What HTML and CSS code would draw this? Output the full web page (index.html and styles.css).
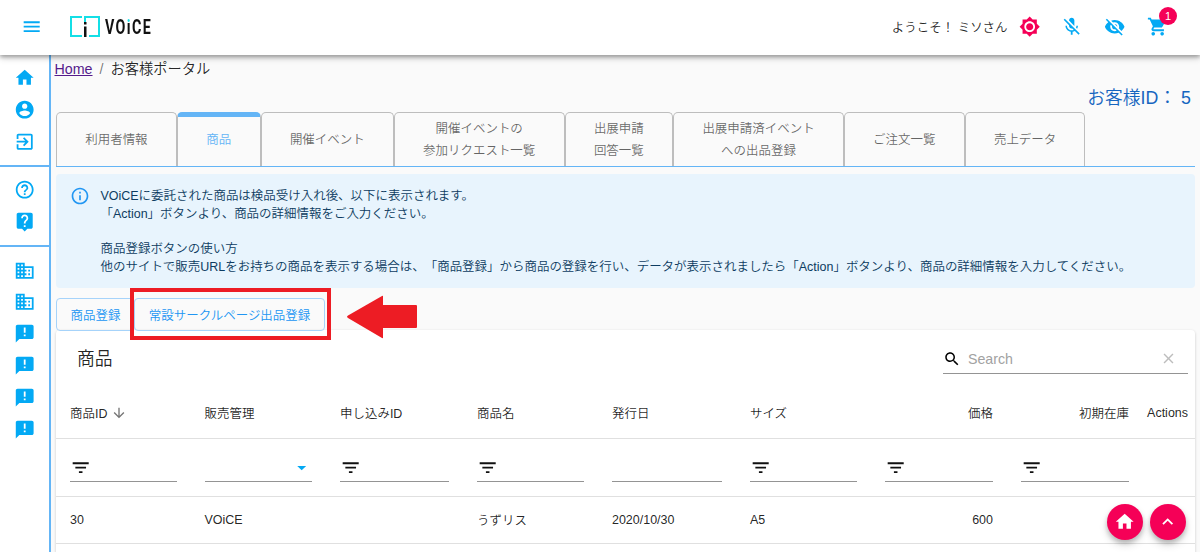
FILE: index.html
```html
<!DOCTYPE html>
<html lang="ja">
<head>
    <meta charset="UTF-8">
    <meta name="viewport" content="width=device-width, initial-scale=1.0">
    <title>お客様ポータル - VOiCE</title>
    <link rel="stylesheet" href="styles.css">
</head>
<body>
    <!-- shared icons -->
    <svg class="sprite">
        <symbol id="menu" viewBox="0 0 24 24"><path d="M3 18h18v-2H3v2zm0-5h18v-2H3v2zm0-7v2h18V6H3z"/></symbol>
        <symbol id="home" viewBox="0 0 24 24"><path d="M10 20v-6h4v6h5v-8h3L12 3 2 12h3v8z"/></symbol>
        <symbol id="account" viewBox="0 0 24 24"><path d="M12 2C6.48 2 2 6.48 2 12s4.48 10 10 10 10-4.48 10-10S17.52 2 12 2zm0 3c1.66 0 3 1.34 3 3s-1.34 3-3 3-3-1.34-3-3 1.34-3 3-3zm0 14.2c-2.5 0-4.71-1.28-6-3.22.03-1.99 4-3.08 6-3.08 1.99 0 5.97 1.09 6 3.08-1.29 1.94-3.5 3.22-6 3.22z"/></symbol>
        <symbol id="exit" viewBox="0 0 24 24"><path d="M10.09 15.59L11.5 17l5-5-5-5-1.41 1.41L12.67 11H3v2h9.67l-2.58 2.59zM19 3H5c-1.11 0-2 .9-2 2v4h2V5h14v14H5v-4H3v4c0 1.1.89 2 2 2h14c1.1 0 2-.9 2-2V5c0-1.1-.9-2-2-2z"/></symbol>
        <symbol id="help" viewBox="0 0 24 24"><path d="M11 18h2v-2h-2v2zm1-16C6.48 2 2 6.48 2 12s4.48 10 10 10 10-4.48 10-10S17.52 2 12 2zm0 18c-4.41 0-8-3.59-8-8s3.59-8 8-8 8 3.59 8 8-3.59 8-8 8zm0-14c-2.21 0-4 1.79-4 4h2c0-1.1.9-2 2-2s2 .9 2 2c0 2-3 1.75-3 5h2c0-2.25 3-2.5 3-5 0-2.21-1.79-4-4-4z"/></symbol>
        <symbol id="live-help" viewBox="0 0 24 24"><path d="M19 2H5c-1.11 0-2 .9-2 2v14c0 1.1.89 2 2 2h4l3 3 3-3h4c1.1 0 2-.9 2-2V4c0-1.1-.9-2-2-2zm-6 16h-2v-2h2v2zm2.07-7.75l-.9.92C13.45 11.9 13 12.5 13 14h-2v-.5c0-1.1.45-2.1 1.17-2.83l1.24-1.26c.37-.36.59-.86.59-1.41 0-1.1-.9-2-2-2s-2 .9-2 2H8c0-2.21 1.79-4 4-4s4 1.79 4 4c0 .88-.36 1.68-.93 2.25z"/></symbol>
        <symbol id="business" viewBox="0 0 24 24"><path d="M12 7V3H2v18h20V7H12zM6 19H4v-2h2v2zm0-4H4v-2h2v2zm0-4H4V9h2v2zm0-4H4V5h2v2zm4 12H8v-2h2v2zm0-4H8v-2h2v2zm0-4H8V9h2v2zm0-4H8V5h2v2zm10 12h-8v-2h2v-2h-2v-2h2v-2h-2V9h8v10zm-2-8h-2v2h2v-2zm0 4h-2v2h2v-2z"/></symbol>
        <symbol id="feedback" viewBox="0 0 24 24"><path d="M20 2H4c-1.1 0-1.99.9-1.99 2L2 22l4-4h14c1.1 0 2-.9 2-2V4c0-1.1-.9-2-2-2zm-7 9h-2V5h2v6zm0 4h-2v-2h2v2z"/></symbol>
        <symbol id="sun" viewBox="0 0 24 24"><path d="M20 8.69V4h-4.69L12 .69 8.69 4H4v4.69L.69 12 4 15.31V20h4.69L12 23.31 15.31 20H20v-4.69L23.31 12 20 8.69zM12 18c-3.31 0-6-2.69-6-6s2.69-6 6-6 6 2.69 6 6-2.69 6-6 6zm0-10c-2.21 0-4 1.79-4 4s1.79 4 4 4 4-1.79 4-4-1.79-4-4-4z"/></symbol>
        <symbol id="mic-off" viewBox="0 0 24 24"><path d="M19 11h-1.7c0 .74-.16 1.43-.43 2.05l1.23 1.23c.56-.98.9-2.09.9-3.28zm-4.02.17c0-.06.02-.11.02-.17V5c0-1.66-1.34-3-3-3S9 3.34 9 5v.18l5.98 5.99zM4.27 3L3 4.27l6.01 6.01V11c0 1.66 1.33 3 2.99 3 .22 0 .44-.03.65-.08l1.66 1.66c-.71.33-1.5.52-2.31.52-2.76 0-5.3-2.1-5.3-5.1H5c0 3.41 2.72 6.23 6 6.72V21h2v-3.28c.91-.13 1.77-.45 2.54-.9L19.73 21 21 19.73 4.27 3z"/></symbol>
        <symbol id="eye-off" viewBox="0 0 24 24"><path d="M12 7c2.76 0 5 2.24 5 5 0 .65-.13 1.26-.36 1.83l2.92 2.92c1.51-1.26 2.7-2.89 3.43-4.75-1.73-4.39-6-7.5-11-7.5-1.4 0-2.74.25-3.98.7l2.16 2.16C10.74 7.13 11.35 7 12 7zM2 4.27l2.28 2.28.46.46C3.08 8.3 1.78 10.02 1 12c1.73 4.39 6 7.5 11 7.5 1.55 0 3.03-.3 4.38-.84l.42.42L19.73 22 21 20.73 3.27 3 2 4.27zM7.53 9.8l1.55 1.55c-.05.21-.08.43-.08.65 0 1.66 1.34 3 3 3 .22 0 .44-.03.65-.08l1.55 1.55c-.67.33-1.41.53-2.2.53-2.76 0-5-2.24-5-5 0-.79.2-1.53.53-2.2zm4.31-.78l3.15 3.15.02-.16c0-1.66-1.34-3-3-3l-.17.01z"/></symbol>
        <symbol id="cart" viewBox="0 0 24 24"><path d="M7 18c-1.1 0-1.99.9-1.99 2S5.9 22 7 22s2-.9 2-2-.9-2-2-2zM1 2v2h2l3.6 7.59-1.35 2.45c-.16.28-.25.61-.25.96 0 1.1.9 2 2 2h12v-2H7.42c-.14 0-.25-.11-.25-.25l.03-.12.9-1.63h7.45c.75 0 1.41-.41 1.75-1.03l3.58-6.49c.08-.14.12-.31.12-.48 0-.55-.45-1-1-1H5.21l-.94-2H1zm16 16c-1.1 0-1.99.9-1.99 2s.89 2 1.99 2 2-.9 2-2-.9-2-2-2z"/></symbol>
        <symbol id="info" viewBox="0 0 24 24"><path d="M11 7h2v2h-2zm0 4h2v6h-2zm1-9C6.48 2 2 6.48 2 12s4.48 10 10 10 10-4.48 10-10S17.52 2 12 2zm0 18c-4.41 0-8-3.59-8-8s3.59-8 8-8 8 3.59 8 8-3.59 8-8 8z"/></symbol>
        <symbol id="down" viewBox="0 0 24 24"><path d="M20 12l-1.41-1.41L13 16.17V4h-2v12.17l-5.58-5.59L4 12l8 8 8-8z"/></symbol>
        <symbol id="search" viewBox="0 0 24 24"><path d="M15.5 14h-.79l-.28-.27C15.41 12.59 16 11.11 16 9.5 16 5.91 13.09 3 9.5 3S3 5.91 3 9.5 5.91 16 9.5 16c1.61 0 3.09-.59 4.23-1.57l.27.28v.79l5 4.99L20.49 19l-4.99-5zm-6 0C7.01 14 5 11.99 5 9.5S7.01 5 9.5 5 14 7.01 14 9.5 11.99 14 9.5 14z"/></symbol>
        <symbol id="clear" viewBox="0 0 24 24"><path d="M19 6.41L17.59 5 12 10.59 6.41 5 5 6.41 10.59 12 5 17.59 6.41 19 12 13.41 17.59 19 19 17.59 13.41 12z"/></symbol>
        <symbol id="filter" viewBox="0 0 24 24"><path d="M10 18h4v-2h-4v2zM3 6v2h18V6H3zm3 7h12v-2H6v2z"/></symbol>
        <symbol id="drop" viewBox="0 0 24 24"><path d="M7 10l5 5 5-5z"/></symbol>
        <symbol id="up" viewBox="0 0 24 24"><path d="M12 8l-6 6 1.41 1.41L12 10.83l4.59 4.58L18 14z"/></symbol>
    </svg>

    <header class="appbar">
        <svg class="icon menu-btn"><use href="#menu"/></svg>
        <div class="logo">
            <svg class="logo-mark" viewBox="0 0 31 22">
                <path d="M12 1H1v19h11M15 6V1h14v19H19" fill="none" stroke="#14dfe6" stroke-width="2"/>
                <path d="M14 6h2.500v2.500h-2.500zM14 10.500h2.500v10.500h-2.500z" fill="#111"/>
            </svg>
            <span class="logo-text">VO<span class="logo-i">i</span>CE</span>
        </div>
        <span class="welcome">ようこそ！ ミソさん</span>
        <div class="appbar-icons">
            <svg class="icon pink"><use href="#sun"/></svg>
            <svg class="icon"><use href="#mic-off"/></svg>
            <svg class="icon"><use href="#eye-off"/></svg>
            <div class="cart">
                <svg class="icon"><use href="#cart"/></svg>
                <span class="badge">1</span>
            </div>
        </div>
    </header>

    <div class="layout">
        <nav class="sidebar">
            <div class="side-group">
                <svg class="icon"><use href="#home"/></svg>
                <svg class="icon"><use href="#account"/></svg>
                <svg class="icon"><use href="#exit"/></svg>
            </div>
            <div class="side-group">
                <svg class="icon"><use href="#help"/></svg>
                <svg class="icon"><use href="#live-help"/></svg>
            </div>
            <div class="side-group">
                <svg class="icon"><use href="#business"/></svg>
                <svg class="icon"><use href="#business"/></svg>
                <svg class="icon"><use href="#feedback"/></svg>
                <svg class="icon"><use href="#feedback"/></svg>
                <svg class="icon"><use href="#feedback"/></svg>
                <svg class="icon"><use href="#feedback"/></svg>
            </div>
        </nav>

        <main class="content">
            <div class="breadcrumbs"><a href="#">Home</a><span class="sep">/</span><span>お客様ポータル</span></div>
            <div class="customer-id">お客様ID： 5</div>

            <div class="tabs">
                <div class="tab tab-m">利用者情報</div>
                <div class="tab tab-s active">商品</div>
                <div class="tab tab-event">開催イベント</div>
                <div class="tab tab-l">開催イベントの<br>参加リクエスト一覧</div>
                <div class="tab tab-answer">出展申請<br>回答一覧</div>
                <div class="tab tab-l">出展申請済イベント<br>への出品登録</div>
                <div class="tab tab-m">ご注文一覧</div>
                <div class="tab tab-m">売上データ</div>
            </div>

            <div class="alert">
                <svg class="alert-icon"><use href="#info"/></svg>
                <div class="alert-text">
                    VOiCEに委託された商品は検品受け入れ後、以下に表示されます。<br>
                    「Action」ボタンより、商品の詳細情報をご入力ください。<br>
                    <br>
                    商品登録ボタンの使い方<br>
                    他のサイトで販売URLをお持ちの商品を表示する場合は、「商品登録」から商品の登録を行い、データが表示されましたら「Action」ボタンより、商品の詳細情報を入力してください。
                </div>
            </div>

            <div class="actions">
                <button class="btn">商品登録</button>
                <button class="btn btn-circle">常設サークルページ出品登録</button>
                <div class="highlight"></div>
                <svg class="arrow" viewBox="0 0 70 44"><path d="M1 20.500L35 1q1-.5 1 .5V10h33q1 0 1 1v21q0 1-1 1H36v9.500q0 1-1 .5L1 23q-2-1.200 0-2.500z"/></svg>
            </div>

            <section class="paper">
                <div class="toolbar">
                    <h2>商品</h2>
                    <div class="search">
                        <svg class="search-icon"><use href="#search"/></svg>
                        <span>Search</span>
                        <svg class="clear-icon"><use href="#clear"/></svg>
                    </div>
                </div>
                <div class="row head">
                    <div class="cell">商品ID<svg class="sort"><use href="#down"/></svg></div>
                    <div class="cell">販売管理</div>
                    <div class="cell">申し込みID</div>
                    <div class="cell">商品名</div>
                    <div class="cell">発行日</div>
                    <div class="cell">サイズ</div>
                    <div class="cell num">価格</div>
                    <div class="cell num">初期在庫</div>
                    <div class="cell last">Actions</div>
                </div>
                <div class="row filters">
                    <div class="cell"><div class="field"><svg class="icon"><use href="#filter"/></svg></div></div>
                    <div class="cell"><div class="field select"><svg class="icon"><use href="#drop"/></svg></div></div>
                    <div class="cell"><div class="field"><svg class="icon"><use href="#filter"/></svg></div></div>
                    <div class="cell"><div class="field"><svg class="icon"><use href="#filter"/></svg></div></div>
                    <div class="cell"><div class="field"></div></div>
                    <div class="cell"><div class="field"><svg class="icon"><use href="#filter"/></svg></div></div>
                    <div class="cell"><div class="field"><svg class="icon"><use href="#filter"/></svg></div></div>
                    <div class="cell"><div class="field"><svg class="icon"><use href="#filter"/></svg></div></div>
                    <div class="cell last"></div>
                </div>
                <div class="row data">
                    <div class="cell">30</div>
                    <div class="cell">VOiCE</div>
                    <div class="cell"></div>
                    <div class="cell">うずリス</div>
                    <div class="cell">2020/10/30</div>
                    <div class="cell">A5</div>
                    <div class="cell num">600</div>
                    <div class="cell num"></div>
                    <div class="cell last"></div>
                </div>
            </section>
        </main>
    </div>

    <div class="fabs">
        <div class="fab"><svg class="icon"><use href="#home"/></svg></div>
        <div class="fab"><svg class="icon"><use href="#up"/></svg></div>
    </div>
</body>
</html>
```

FILE: styles.css
```css
* {
    box-sizing: border-box;
}
body {
    margin: 0;
    height: 552px;
    overflow: hidden;
    background: #fafafa;
    color: rgba(0,0,0,0.87);
    font-family: "Liberation Sans", "Noto Sans CJK JP", sans-serif;
    font-size: 12.48px;
    font-weight: 350;
    text-spacing-trim: space-all;
}
.sprite {
    display: none;
}
.icon {
    display: block;
    flex: none;
    width: 21.4px;
    height: 21.4px;
    fill: #03a9f4;
}
.appbar {
    position: relative;
    z-index: 2;
    display: flex;
    align-items: center;
    height: 55px;
    padding: 0 32px 2px 21px;
    background: #fff;
    box-shadow: 0 2px 4px rgba(0,0,0,0.3), 0 3px 7px rgba(0,0,0,0.16);
}
.logo {
    display: flex;
    align-items: center;
    margin-left: 28px;
}
.logo-mark {
    width: 31px;
    height: 22px;
}
.logo-text {
    margin-left: 4px;
    color: #111;
    font-family: Roboto, sans-serif;
    font-size: 21px;
    font-weight: 700;
    letter-spacing: 2px;
    line-height: 22px;
    transform: scaleX(0.68);
    transform-origin: left;
}
.logo-i {
    background: linear-gradient(#14dfe6 7px, #111 7px);
    -webkit-background-clip: text;
    background-clip: text;
    color: transparent;
}
.welcome {
    margin-left: auto;
}
.appbar-icons {
    display: flex;
    gap: 21.3px;
    margin-left: 11px;
}
.pink {
    fill: #f50057;
}
.cart {
    position: relative;
}
.badge {
    position: absolute;
    top: -9px;
    right: -9px;
    width: 18px;
    height: 18px;
    border-radius: 50%;
    background: #f50057;
    color: #fff;
    font-size: 11px;
    line-height: 18px;
    text-align: center;
}
.layout {
    display: flex;
    height: 497px;
}
.sidebar {
    flex: none;
    width: 51px;
    background: #fff;
    border-right: 2px solid #64b5f6;
}
.side-group {
    display: flex;
    flex-direction: column;
    align-items: center;
    gap: 10.6px;
    padding: 12.4px 0 12.3px;
    border-bottom: 2px solid #64b5f6;
}
.side-group:last-child {
    border-bottom: none;
}
.content {
    flex: none;
    width: 1144px;
    padding-left: 5px;
}
.breadcrumbs {
    display: flex;
    height: 28px;
    margin-left: -1.5px;
    font-size: 14.25px;
    line-height: 28px;
}
.breadcrumbs a {
    color: #551a8b;
}
.sep {
    margin: 0 7px;
    color: rgba(0,0,0,0.54);
}
.customer-id {
    height: 29px;
    margin-right: 4px;
    color: #1565c0;
    font-size: 17.8px;
    line-height: 31px;
    text-align: right;
}
.tabs {
    display: flex;
    height: 55px;
    border-bottom: 1px solid #64b5f6;
}
.tab {
    display: flex;
    align-items: center;
    justify-content: center;
    padding-top: 2px;
    border: 1px solid #bdbdbd;
    border-bottom: none;
    border-radius: 5px 5px 0 0;
    color: rgba(0,0,0,0.6);
    line-height: 21.4px;
    text-align: center;
}
.tab-s {
    width: 84px;
}
.tab-m {
    width: 120.8px;
}
.tab-event {
    width: 133px;
}
.tab-l {
    width: 170.8px;
}
.tab-answer {
    width: 108.5px;
}
.tab.active {
    border-top: 5px solid #64b5f6;
    padding-bottom: 3px;
    color: #64b5f6;
}
.alert {
    display: flex;
    height: 114px;
    margin-top: 7px;
    padding: 12px 14px;
    border-radius: 4px;
    background: #e8f4fd;
    color: #0d3c61;
    line-height: 17.8px;
    white-space: nowrap;
}
.alert-icon {
    flex: none;
    width: 20px;
    height: 20px;
    margin-right: 10.5px;
    fill: #2196f3;
}
.alert-text {
    padding-top: 2px;
}
.actions {
    position: relative;
    display: flex;
    height: 42px;
    padding-top: 10px;
}
.btn {
    width: 79px;
    height: 33px;
    padding: 0;
    border: 1px solid #a6d3fa;
    border-radius: 4px;
    background: transparent;
    color: #2196f3;
    font: inherit;
}
.btn-circle {
    width: 191px;
    margin-left: -1px;
}
/* callout around the circle page button */
.highlight {
    position: absolute;
    top: 0;
    left: 74px;
    width: 201px;
    height: 52px;
    border: 4px solid #ed1c24;
}
.arrow {
    position: absolute;
    top: 7px;
    left: 290.5px;
    width: 70px;
    height: 44px;
    fill: #ed1c24;
}
.paper {
    height: 240px;
    border-radius: 4px;
    background: #fff;
    box-shadow: 0 1px 3px rgba(0,0,0,0.2);
}
.toolbar {
    display: flex;
    justify-content: space-between;
    height: 58px;
    padding: 0 7px 0 21px;
}
.toolbar h2 {
    margin: 0;
    font-size: 17.8px;
    font-weight: 350;
    line-height: 58px;
}
.search {
    display: flex;
    align-items: center;
    width: 245px;
    height: 30px;
    margin-top: 14px;
    border-bottom: 1px solid #949494;
    color: #a2a2a2;
    font-size: 14.2px;
}
.search-icon {
    width: 18px;
    height: 18px;
    margin-right: 7px;
}
.clear-icon {
    width: 17px;
    height: 17px;
    margin-left: auto;
    margin-right: 11px;
    fill: #bdbdbd;
}
.row {
    display: grid;
    grid-template-columns: 134.5px 135.5px 137px 135px 138px 135px 136px 136px 52px;
    align-items: center;
    border-bottom: 1px solid #e0e0e0;
}
.cell {
    display: flex;
    align-items: center;
    padding: 0 14px;
    white-space: nowrap;
}
.num {
    justify-content: flex-end;
}
.last {
    justify-content: flex-end;
    padding: 0 7px 0 0;
}
.head {
    height: 51px;
}
.sort {
    width: 16px;
    height: 16px;
    margin-left: 4px;
    fill: #757575;
}
.filters {
    height: 58px;
}
.field {
    display: flex;
    align-items: center;
    width: 100%;
    height: 29px;
    padding-top: 1px;
    border-bottom: 1px solid #949494;
}
.field .icon {
    fill: #111;
}
.select {
    justify-content: flex-end;
}
.select .icon {
    fill: #03a9f4;
}
.data {
    height: 47px;
}
.fabs {
    position: fixed;
    right: 14px;
    bottom: 12px;
    z-index: 3;
    display: flex;
    gap: 7px;
}
.fab {
    display: flex;
    align-items: center;
    justify-content: center;
    width: 36px;
    height: 36px;
    border-radius: 50%;
    background: #f50057;
    box-shadow: 0 3px 5px rgba(0,0,0,0.2), 0 5px 9px rgba(0,0,0,0.14);
}
.fab .icon {
    fill: #fff;
}
```
